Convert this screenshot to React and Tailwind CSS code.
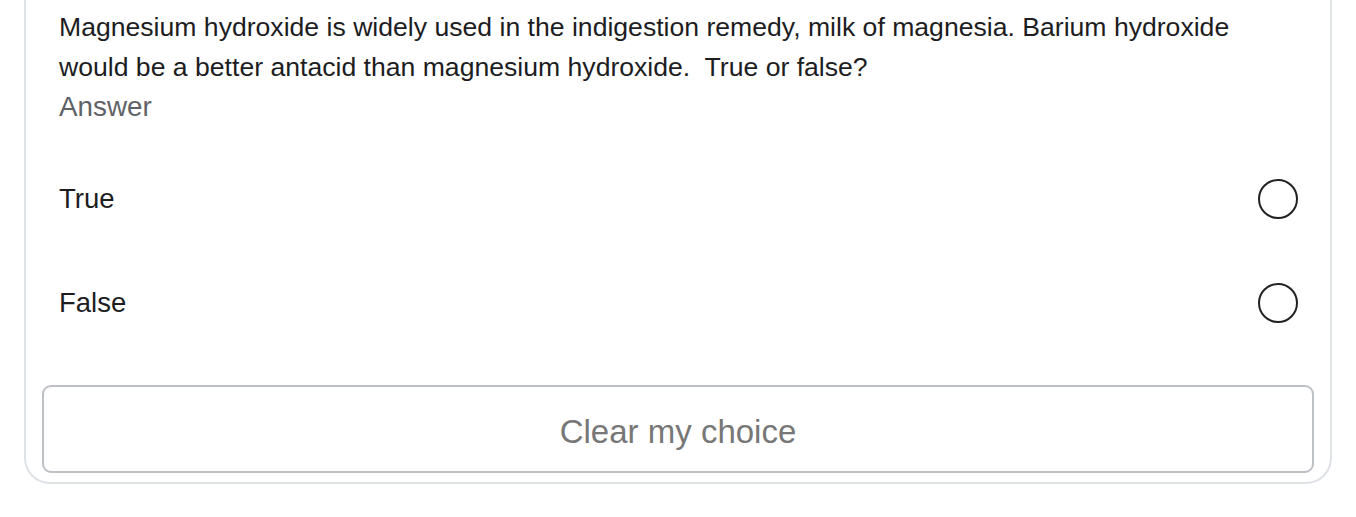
export default function App() {
  const font = { fontFamily: '"Liberation Sans", Arial, sans-serif' };
  return (
    <div className="w-[1356px] h-[517px] bg-white overflow-hidden" style={font}>
      <div className="ml-[24px] mr-[24px] -mt-[30px] h-[514px] border-2 border-[#dee2e6] rounded-b-[26px] border-t-0 pt-[30px] pl-[16px] pr-[16px] flex flex-col">
        <div className="pl-[17px]">
          <div className="text-[26.6px] leading-[40px] text-[#1d1d1f] pt-[7px]">
            Magnesium hydroxide is widely used in the indigestion remedy, milk of magnesia. Barium hydroxide<br />would be a better antacid than magnesium hydroxide.&nbsp; True or false?
          </div>
          <div className="text-[27.8px] leading-[40px] text-[#5f6368]">Answer</div>
          <div className="mt-[20px] flex flex-col pr-[16px]">
            <div className="flex items-center justify-between h-[104px]">
              <span className="text-[27.5px] text-[#1d1d1f]">True</span>
              <span className="w-[40px] h-[40px] rounded-full border-2 border-[#222]"></span>
            </div>
            <div className="flex items-center justify-between h-[104px]">
              <span className="text-[27.5px] text-[#1d1d1f]">False</span>
              <span className="w-[40px] h-[40px] rounded-full border-2 border-[#222]"></span>
            </div>
          </div>
        </div>
        <button className="mt-[30px] h-[88px] pt-[5px] border-2 border-[#bdc0c4] rounded-[9px] text-[33px] text-[#777] bg-white">
          Clear my choice
        </button>
      </div>
    </div>
  );
}
